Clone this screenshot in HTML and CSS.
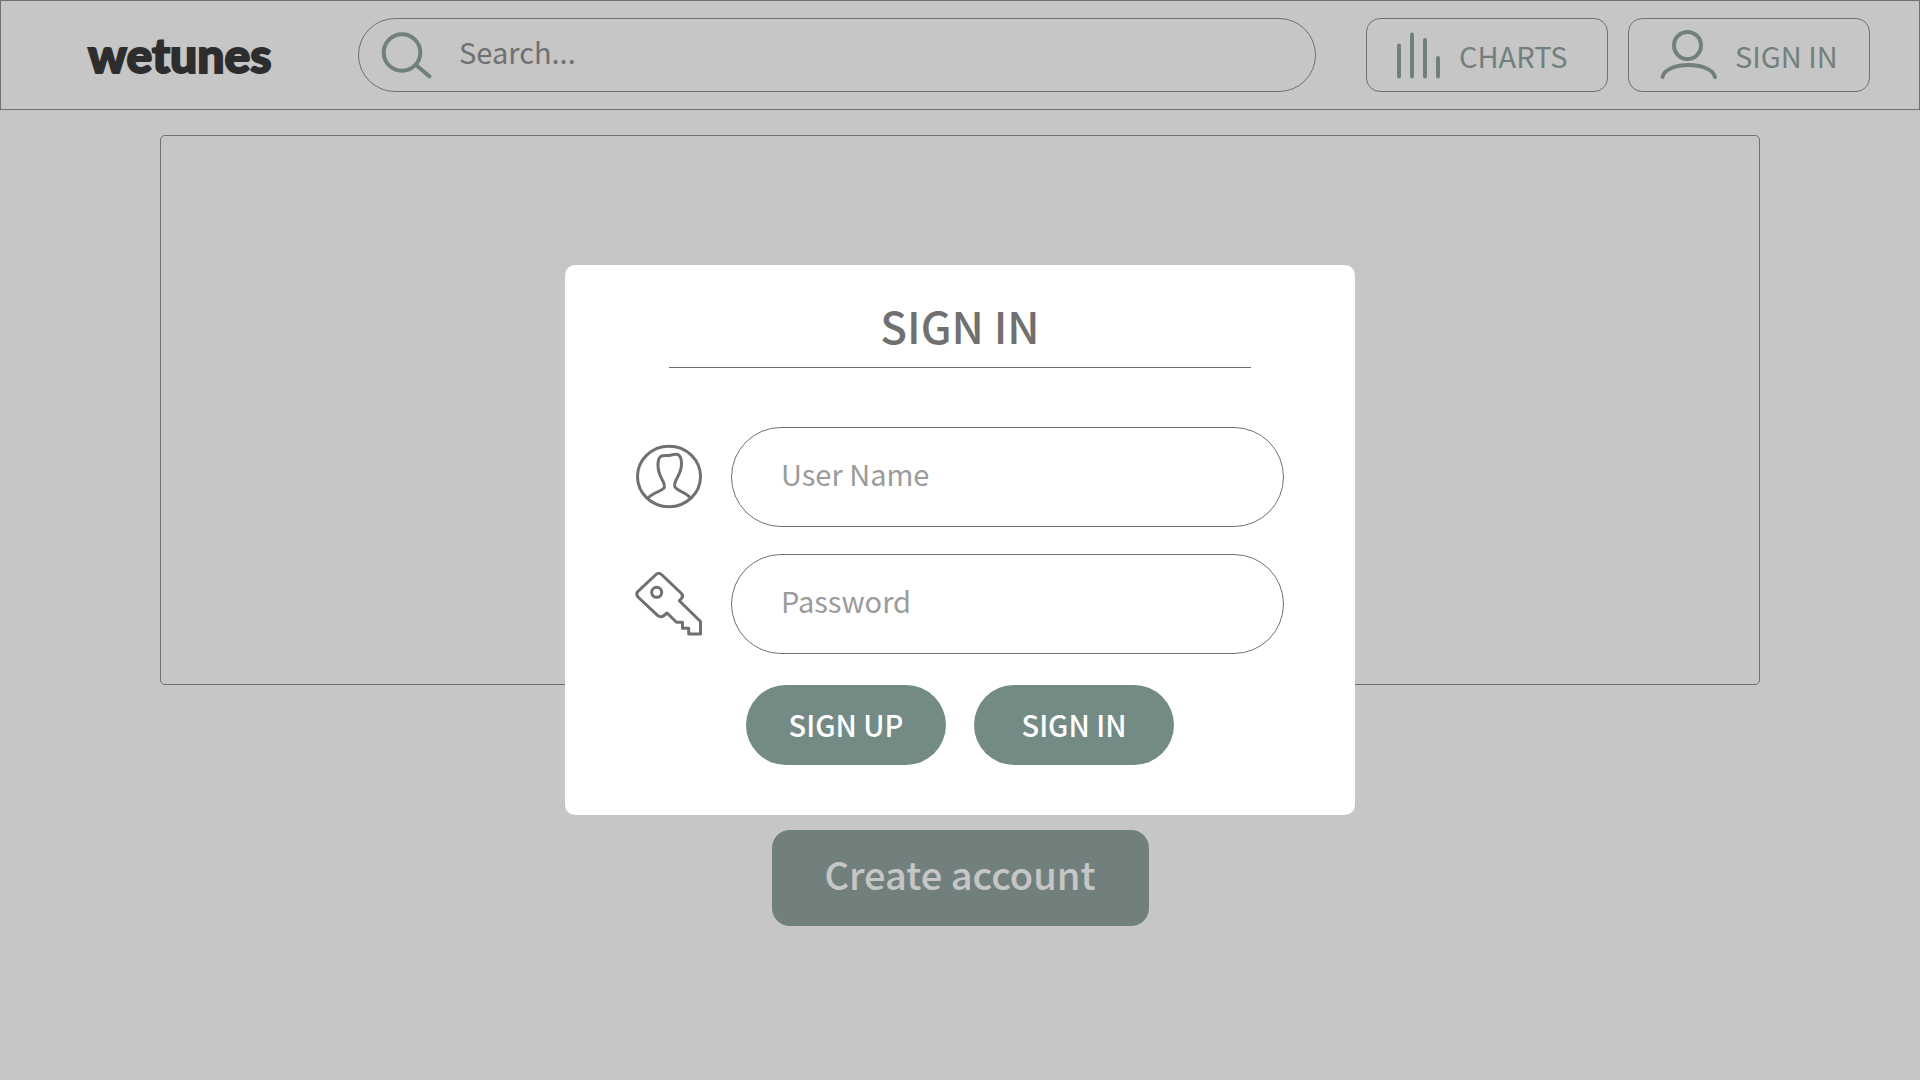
FILE: index.html
```html
<!DOCTYPE html>
<html lang="en">
<head>
<meta charset="utf-8">
<title>wetunes</title>
<link rel="stylesheet" href="styles.css">
</head>
<body>
<div class="page">
  <header class="topbar">
    <a class="logo" href="#">wetunes</a>
    <label class="search">
      <svg class="icon-search" viewBox="0 0 52 48" aria-hidden="true"><circle cx="21" cy="21.500" r="18.300"/><path d="M35 34 48.500 45.500"/></svg>
      <input class="search-input" type="text" placeholder="Search..." aria-label="Search">
    </label>
    <nav class="actions">
      <button class="nav-button" type="button">
        <svg class="icon-charts" viewBox="0 0 44 48" aria-hidden="true"><path d="M2 14.500v31M15 3.500v42M28 9v36.500M41 27v18.500"/></svg>
        <span>CHARTS</span>
      </button>
      <button class="nav-button" type="button">
        <svg class="icon-user" viewBox="0 0 58 50" aria-hidden="true"><circle cx="28.500" cy="15.500" r="13.500"/><path d="M3.500 47C7 31 52 31 56 47"/></svg>
        <span>SIGN IN</span>
      </button>
    </nav>
  </header>
  <main class="content">
    <section class="banner"></section>
    <button class="create-button" type="button">Create account</button>
  </main>
</div>
<div class="overlay">
  <form class="dialog" role="dialog" aria-labelledby="dialog-title">
    <h1 class="dialog-title" id="dialog-title">SIGN IN</h1>
    <label class="field">
      <svg class="field-icon" viewBox="0 0 66 64" aria-hidden="true">
        <ellipse cx="33" cy="31.500" rx="31.500" ry="30.300"/>
        <path d="M12 53C17 47 27 46 28.300 42.500C29.500 36 22 33 22 20C22 8 28 11 33.300 10.500C37 10 45.500 5 45.500 19C45.500 30 38 34 38.700 41C39.500 46 49 46 54.500 53"/>
      </svg>
      <input class="field-input" type="text" placeholder="User Name" aria-label="User Name">
    </label>
    <label class="field">
      <svg class="field-icon" viewBox="0 0 66 64" aria-hidden="true">
        <path d="M20 2.500Q22.700 0 25.500 2.500L45.500 21.500Q48 24.500 45 27L43.300 28.700L64.500 49.500V62H52.700V56.300H46.500V50.300H40.500L31 41L28 43.500Q24.700 46 21.500 43.300L2 25Q-0.500 22 2 19.300Z"/>
        <circle cx="20.700" cy="20.300" r="5"/>
      </svg>
      <input class="field-input" type="password" placeholder="Password" aria-label="Password">
    </label>
    <div class="dialog-actions">
      <button class="pill" type="button">SIGN UP</button>
      <button class="pill" type="submit">SIGN IN</button>
    </div>
  </form>
</div>
</body>
</html>
```
FILE: styles.css
```css
* {
  box-sizing: border-box;
}

body {
  margin: 0;
  background: #fff;
  color: #707070;
  font-family: "Noto Sans CJK SC", "Noto Sans", sans-serif;
}

button,
input {
  font: inherit;
  color: inherit;
}

button {
  cursor: pointer;
  white-space: nowrap;
}

svg {
  flex: none;
  overflow: visible;
  fill: none;
  stroke: currentColor;
  stroke-linecap: round;
  stroke-linejoin: round;
}

.topbar {
  display: flex;
  align-items: center;
  height: 110px;
  padding: 0 49px 0 87px;
  border: 1px solid #707070;
}

.logo {
  width: 270px;
  color: #000;
  font-family: Lato, sans-serif;
  font-size: 48px;
  font-weight: 900;
  line-height: 48px;
  text-decoration: none;
  -webkit-text-stroke: 2px #000;
}

.search {
  display: flex;
  flex: 1;
  align-items: center;
  gap: 26px;
  height: 74px;
  padding: 0 22px;
  border: 1px solid #707070;
  border-radius: 37px;
}

.search-input {
  flex: 1;
  min-width: 0;
  padding: 0 0 8px;
  border: 0;
  outline: 0;
  background: none;
  font-size: 29px;
  line-height: 40px;
}

.icon-search {
  width: 52px;
  height: 48px;
  color: #748b85;
  stroke-width: 4;
}

.actions {
  display: flex;
  gap: 20px;
  margin-left: 50px;
}

.nav-button {
  display: flex;
  align-items: center;
  gap: 18px;
  width: 242px;
  height: 74px;
  padding: 0 30px;
  border: 1px solid #707070;
  border-radius: 14px;
  background: none;
  color: #748b85;
  font-size: 29px;
  line-height: 40px;
}

.icon-charts {
  width: 44px;
  height: 48px;
  stroke-width: 4;
}

.icon-user {
  width: 58px;
  height: 50px;
  stroke-width: 4;
}

.content {
  display: flex;
  flex-direction: column;
  align-items: center;
  gap: 145px;
  padding: 25px 160px 0;
}

.banner {
  width: 100%;
  height: 550px;
  border: 1px solid #707070;
  border-radius: 5px;
}

.create-button {
  min-width: 377px;
  height: 96px;
  padding: 0 50px 8px;
  border: 0;
  border-radius: 18px;
  background: #748b85;
  color: #fff;
  font-size: 38px;
  font-weight: 500;
  line-height: 48px;
}

.overlay {
  position: fixed;
  inset: 0;
  display: flex;
  align-items: center;
  justify-content: center;
  background: rgba(112, 112, 112, 0.4);
}

.dialog {
  display: flex;
  flex-direction: column;
  gap: 27px;
  width: 790px;
  padding: 30px 71px 50px;
  border-radius: 10px;
  background: #fff;
}

.dialog-title {
  margin: 0 33px 32px;
  padding-bottom: 12px;
  border-bottom: 1px solid #707070;
  font-size: 44px;
  font-weight: 500;
  line-height: 60px;
  text-align: center;
}

.field {
  display: flex;
  align-items: center;
  gap: 29px;
}

.field-icon {
  width: 66px;
  height: 64px;
  stroke-width: 3;
}

.field-input {
  flex: 1;
  min-width: 0;
  height: 100px;
  padding: 0 49px 8px;
  border: 1px solid #707070;
  border-radius: 50px;
  outline: 0;
  font-size: 29px;
}

.search-input::placeholder {
  color: #707070;
}

.field-input::placeholder {
  color: #9b9b9b;
}

.dialog-actions {
  display: flex;
  justify-content: center;
  gap: 28px;
  margin-top: 4px;
}

.pill {
  width: 200px;
  height: 80px;
  padding: 0 0 2px;
  border: 0;
  border-radius: 40px;
  background: #748b85;
  color: #fff;
  font-size: 29px;
  font-weight: 500;
}
```
